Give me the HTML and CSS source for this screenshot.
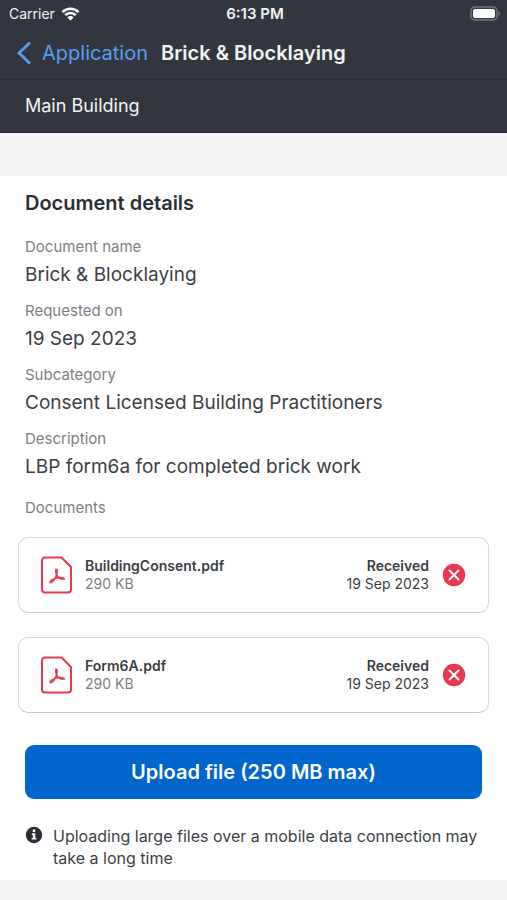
FILE: index.html
```html
<!DOCTYPE html>
<html lang="en">
<head>
<meta charset="utf-8">
<meta name="viewport" content="width=device-width, initial-scale=1">
<title>Brick &amp; Blocklaying</title>
<link rel="stylesheet" href="styles.css">
</head>
<body>

<header class="header">
  <div class="status">
    <div class="carrier">
      <span>Carrier</span>
      <svg width="19" height="14" viewBox="0 0 18 14" fill="none" stroke="#fff" stroke-width="2.6">
        <path d="M1 5.1a11.4 11.4 0 0 1 16 0"/>
        <path d="M3.8 8.1a7.4 7.4 0 0 1 10.4 0"/>
        <path d="M9 13.6 5.9 10.4a4.4 4.4 0 0 1 6.2 0z" fill="#fff" stroke="none"/>
      </svg>
    </div>
    <span class="time">6:13 PM</span>
    <svg class="battery" width="31" height="15" viewBox="0 0 31 15">
      <rect x="1" y="1" width="26" height="13" rx="4" fill="none" stroke="#74777d" stroke-width="1.4"/>
      <rect x="3" y="3" width="22" height="9" rx="2" fill="#fff"/>
      <path d="M28.6 5c1.9.8 1.9 4.2 0 5z" fill="#74777d"/>
    </svg>
  </div>
  <nav class="nav">
    <a class="back" href="#">
      <svg width="16" height="24" viewBox="0 0 16 24" fill="none" stroke="#5b9df0" stroke-width="2.8">
        <path d="M14 1.5 3 12l11 10.5"/>
      </svg>
      Application
    </a>
    <h1>Brick &amp; Blocklaying</h1>
  </nav>
  <div class="building">Main Building</div>
</header>

<main class="card">
  <h2>Document details</h2>
  <dl class="details">
    <dt>Document name</dt>
    <dd>Brick &amp; Blocklaying</dd>
    <dt>Requested on</dt>
    <dd>19 Sep 2023</dd>
    <dt>Subcategory</dt>
    <dd>Consent Licensed Building Practitioners</dd>
    <dt>Description</dt>
    <dd>LBP form6a for completed brick work</dd>
  </dl>

  <h3>Documents</h3>
  <ul class="files">
    <li class="file">
      <svg width="32" height="38" viewBox="0 0 32 38" fill="none" stroke="#e8384f" stroke-width="2" stroke-linejoin="round">
        <path d="M4 1.5h16.5L30 11v22.5a3 3 0 0 1-3 3H4a3 3 0 0 1-3-3v-29a3 3 0 0 1 3-3z"/>
        <path stroke-width="1.6" stroke-linecap="round" d="M15 13.2c-.6 2.4 0 5 1.600 7.300 1.300 1.800 3.600 2.800 6.700 2.500M15 13.200c1.600-.2 1.400 3.300.4 6-1.200 3.200-3 6.300-5.200 7.400-1.600.4-1.200-1.300.4-2.400 3.200-2.200 8.200-3.200 11.500-2.200.9.300 1.200.7 1.200 1"/>
      </svg>
      <div class="name">
        <strong>BuildingConsent.pdf</strong>
        <span>290 KB</span>
      </div>
      <div class="state">
        <strong>Received</strong>
        <span>19 Sep 2023</span>
      </div>
      <button class="remove" type="button" aria-label="Remove BuildingConsent.pdf">
        <svg width="24" height="24" viewBox="0 0 24 24">
          <circle cx="12" cy="12" r="11.2" fill="#e8384f"/>
          <path d="m7.5 7.5 9 9m0-9-9 9" stroke="#fff" stroke-width="2" stroke-linecap="round"/>
        </svg>
      </button>
    </li>
    <li class="file">
      <svg width="32" height="38" viewBox="0 0 32 38" fill="none" stroke="#e8384f" stroke-width="2" stroke-linejoin="round">
        <path d="M4 1.5h16.5L30 11v22.5a3 3 0 0 1-3 3H4a3 3 0 0 1-3-3v-29a3 3 0 0 1 3-3z"/>
        <path stroke-width="1.6" stroke-linecap="round" d="M15 13.2c-.6 2.4 0 5 1.600 7.300 1.300 1.800 3.600 2.800 6.700 2.500M15 13.200c1.600-.2 1.400 3.300.4 6-1.200 3.200-3 6.300-5.200 7.400-1.600.4-1.200-1.300.4-2.400 3.200-2.200 8.200-3.200 11.500-2.200.9.300 1.200.7 1.200 1"/>
      </svg>
      <div class="name">
        <strong>Form6A.pdf</strong>
        <span>290 KB</span>
      </div>
      <div class="state">
        <strong>Received</strong>
        <span>19 Sep 2023</span>
      </div>
      <button class="remove" type="button" aria-label="Remove Form6A.pdf">
        <svg width="24" height="24" viewBox="0 0 24 24">
          <circle cx="12" cy="12" r="11.2" fill="#e8384f"/>
          <path d="m7.5 7.5 9 9m0-9-9 9" stroke="#fff" stroke-width="2" stroke-linecap="round"/>
        </svg>
      </button>
    </li>
  </ul>

  <button class="upload" type="button">Upload file (250 MB max)</button>

  <div class="note">
    <svg width="18" height="18" viewBox="0 0 18 18">
      <circle cx="9" cy="9" r="8.2" fill="#2b2e35"/>
      <path d="M7.8 3.6h2.4v2.3H7.8zM6.8 7.200h3.500v4.700h1.100v1.700H6.700v-1.700h1.200V8.900H6.800z" fill="#fff"/>
    </svg>
    <p>Uploading large files over a mobile data connection may take a long time</p>
  </div>
</main>

</body>
</html>
```

FILE: styles.css
```css
* {
  box-sizing: border-box;
}

body {
  margin: 0;
  background-color: #f4f4f4;
  color: #3c3f44;
  font-family: Inter, "Liberation Sans", sans-serif;
  font-size: 16px;
}

h1, h2, h3, p, dl, dd, ul {
  margin: 0;
  padding: 0;
}

svg {
  display: block;
  flex-shrink: 0;
}

.header {
  background-color: #32373f;
  color: #f2f3f5;
  border-bottom: 1px solid #24272d;
}

.status {
  display: grid;
  grid-template-columns: 1fr auto 1fr;
  align-items: center;
  height: 27px;
  padding: 0 6px 0 9px;
  font-size: 14px;
}

.carrier {
  display: flex;
  align-items: center;
  gap: 6px;
}

.time {
  font-size: 15px;
  font-weight: 600;
}

.battery {
  justify-self: end;
}

.nav {
  display: flex;
  align-items: center;
  gap: 13px;
  height: 53px;
  padding: 0 16px;
  border-bottom: 1px solid #2a2e35;
}

.back {
  display: flex;
  align-items: center;
  gap: 10px;
  color: #5b9df0;
  font-size: 20px;
  text-decoration: none;
}

h1 {
  font-size: 20px;
  font-weight: 600;
}

.building {
  padding: 14px 25px;
  font-size: 18px;
  line-height: 24px;
}

.card {
  margin-top: 43px;
  padding: 12px 25px 11px;
  background-color: #fff;
}

h2 {
  color: #2b2e33;
  font-size: 20px;
  font-weight: 600;
  line-height: 30px;
}

.details {
  padding-top: 19px;
}

dt, h3 {
  color: #7d7f82;
  font-size: 15px;
  font-weight: 400;
  line-height: 20px;
}

dd {
  padding: 4px 0 12px;
  font-size: 19px;
  line-height: 28px;
}

h3 {
  padding-top: 5px;
}

/* File cards sit a little wider than the text */
.files {
  display: grid;
  gap: 24px;
  margin: 19px -7px 32px;
  list-style: none;
}

.file {
  display: flex;
  align-items: center;
  height: 76px;
  padding: 0 22px;
  border: 1px solid #d9d9d9;
  border-bottom-color: #c8c8c8;
  border-radius: 10px;
}

.name, .state {
  display: grid;
  font-size: 14px;
  line-height: 18px;
}

.name {
  flex: 1;
  padding-left: 12px;
}

.name span {
  color: #7d7f82;
}

.state {
  text-align: right;
}

strong {
  font-weight: 600;
}

.remove {
  margin-left: 13px;
  padding: 0;
  border: none;
  background: none;
  cursor: pointer;
}

.upload {
  display: block;
  width: 100%;
  height: 54px;
  border: none;
  border-radius: 9px;
  background-color: #0066cc;
  color: #fff;
  font-family: inherit;
  font-size: 20px;
  font-weight: 600;
  cursor: pointer;
}

.note {
  display: flex;
  gap: 10px;
  padding-top: 26px;
  font-size: 16px;
  line-height: 22px;
}

.note svg {
  margin-top: 1px;
}
```
